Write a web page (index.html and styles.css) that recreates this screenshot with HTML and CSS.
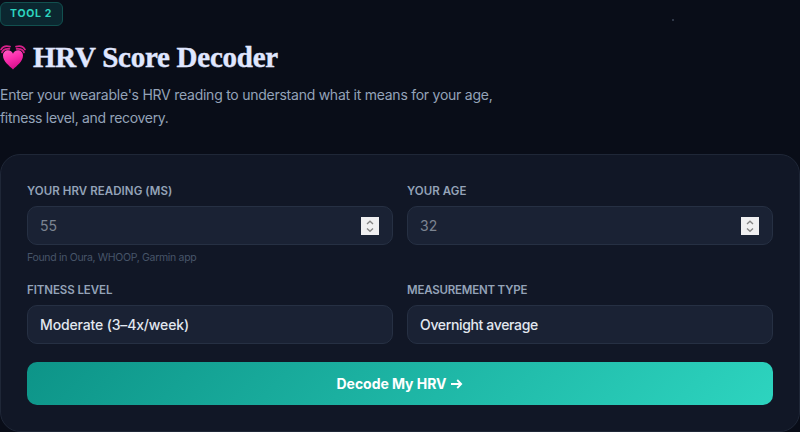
FILE: index.html
```html
<!DOCTYPE html>
<html lang="en">
<head>
    <meta charset="UTF-8">
    <meta name="viewport" content="width=device-width, initial-scale=1.0">
    <title>HRV Score Decoder</title>
    <link rel="stylesheet" href="styles.css">
</head>
<body>
    <span class="star"></span>
    <section class="tool">
        <div class="tool-tag">TOOL 2</div>
        <h2 class="tool-title">
            <svg class="heart" viewBox="0 0 26 26" aria-hidden="true">
                <defs>
                    <linearGradient id="heartFill" x1="0" y1="0" x2="0.4" y2="1">
                        <stop offset="0" stop-color="#ff5cc4"/>
                        <stop offset="0.5" stop-color="#fb2fae"/>
                        <stop offset="1" stop-color="#d8108c"/>
                    </linearGradient>
                </defs>
                <path d="M13 25.500C9.500 22 3 17.800 3 11.600C3 8.300 5.400 6.300 8 6.300C10.400 6.300 12.200 7.800 13 9.800C13.800 7.800 15.600 6.300 18 6.300C20.600 6.300 23 8.300 23 11.600C23 17.800 16.500 22 13 25.500Z" fill="url(#heartFill)"/>
                <g fill="none" stroke="#d8208a" stroke-width="1.7" stroke-linecap="round">
                    <path d="M2 8.400C3 5.800 5.400 4.400 9.400 4.900"/>
                    <path d="M1 5.600C2.600 2.600 5.800 1.400 10 2.600"/>
                    <path d="M24 8.400C23 5.800 20.600 4.400 16.600 4.900"/>
                    <path d="M25 5.600C23.400 2.600 20.200 1.400 16 2.600"/>
                </g>
            </svg>
            <span class="title-text">HRV Score Decoder</span>
        </h2>
        <p class="tool-desc"><span class="desc-one">Enter your wearable's HRV reading to understand what it means for your age,</span><br><span class="desc-two">fitness level, and recovery.</span></p>

        <form class="card" onsubmit="return false">
            <div class="form-grid">
                <div class="field">
                    <label class="label-hrv" for="hrv">YOUR HRV READING (MS)</label>
                    <div class="control">
                        <input type="text" inputmode="numeric" id="hrv" placeholder="55">
                        <span class="spinner"><svg viewBox="0 0 18 18"><path d="M6 7L9 4.300L12 7M6 11.500L9 14.200L12 11.500"/></svg></span>
                    </div>
                    <div class="hint">Found in Oura, WHOOP, Garmin app</div>
                </div>
                <div class="field">
                    <label class="label-age" for="age">YOUR AGE</label>
                    <div class="control">
                        <input type="text" inputmode="numeric" id="age" placeholder="32">
                        <span class="spinner"><svg viewBox="0 0 18 18"><path d="M6 7L9 4.300L12 7M6 11.500L9 14.200L12 11.500"/></svg></span>
                    </div>
                </div>
                <div class="field">
                    <label class="label-fitness" for="fitness">FITNESS LEVEL</label>
                    <select class="control select-fitness" id="fitness">
                        <option>Moderate (3–4x/week)</option>
                    </select>
                </div>
                <div class="field">
                    <label class="label-type" for="type">MEASUREMENT TYPE</label>
                    <select class="control select-type" id="type">
                        <option>Overnight average</option>
                    </select>
                </div>
            </div>
            <button class="decode-btn" type="submit">
                <span>Decode My HRV</span>
                <svg viewBox="0 0 13 12" aria-hidden="true"><path d="M1 6H11M7.200 2L11.200 6L7.200 10"/></svg>
            </button>
        </form>
    </section>
</body>
</html>
```
FILE: styles.css
```css
* {
    box-sizing: border-box;
}
body {
    margin: 0;
    height: 432px;
    overflow: hidden;
    background-color: #090d18;
    color: #e2e8f0;
    font-family: Inter, "Liberation Sans", sans-serif;
}
.star {
    position: absolute;
    left: 672px;
    top: 19px;
    width: 2px;
    height: 2px;
    border-radius: 50%;
    background: #3c4657;
}
.tool {
    padding-top: 2px;
}
.tool-tag {
    width: 63px;
    height: 24px;
    padding-left: 9px;
    border: 1px solid #12504f;
    border-radius: 6px;
    background: #0b2730;
    color: #2dd4bf;
    font-size: 10.5px;
    font-weight: 700;
    line-height: 22px;
    letter-spacing: 0.7px;
    white-space: nowrap;
}
.tool-title {
    display: flex;
    align-items: center;
    gap: 7px;
    height: 36px;
    margin: 13px 0 0;
    color: #e0e7ff;
    font-family: "Liberation Serif", serif;
    font-size: 29px;
    font-weight: 700;
    line-height: 36px;
    white-space: nowrap;
}
.heart {
    width: 26px;
    height: 26px;
}
.title-text {
    letter-spacing: -0.25px;
    -webkit-text-stroke: 0.4px #e0e7ff;
}
.tool-desc {
    margin: 8px 0 0;
    color: #94a3b8;
    font-size: 14px;
    line-height: 23px;
    white-space: nowrap;
}
.desc-one {
    letter-spacing: -0.25px;
}
.desc-two {
    letter-spacing: -0.31px;
}
.card {
    height: 278px;
    margin-top: 25px;
    padding: 29px 26px 0;
    border: 1px solid #1f2737;
    border-radius: 20px;
    background: #111726;
}
.form-grid {
    display: grid;
    grid-template-columns: 1fr 1fr;
    gap: 18px 14px;
}
.field label {
    display: block;
    height: 14px;
    margin-bottom: 8px;
    color: #94a3b8;
    font-size: 11.5px;
    font-weight: 600;
    line-height: 14px;
    letter-spacing: 0.07px;
    white-space: nowrap;
}
.field .label-fitness {
    letter-spacing: -0.08px;
}
.field .label-type {
    letter-spacing: -0.2px;
}
.control {
    display: flex;
    align-items: center;
    width: 100%;
    height: 39px;
    padding: 0 13px 0 12px;
    border: 1px solid #263043;
    border-radius: 10px;
    background: #1a2234;
    color: #e2e8f0;
}
.control input {
    flex: 1;
    min-width: 0;
    padding: 0;
    border: 0;
    outline: 0;
    background: none;
    color: #e2e8f0;
    font: 14px Inter, sans-serif;
}
.control input::placeholder {
    color: #7c8491;
}
select.control {
    appearance: none;
    font: 500 14px Inter, sans-serif;
}
.select-fitness {
    letter-spacing: -0.15px;
}
.select-type {
    letter-spacing: -0.35px;
}
.spinner {
    width: 18px;
    height: 18px;
    background: #efeff1;
}
.spinner svg {
    display: block;
    fill: none;
    stroke: #858585;
    stroke-width: 1.4;
}
.hint {
    height: 14px;
    margin-top: 6px;
    color: #475569;
    font-size: 10.5px;
    line-height: 14px;
    letter-spacing: -0.32px;
    white-space: nowrap;
}
.decode-btn {
    display: flex;
    align-items: center;
    justify-content: center;
    gap: 4px;
    width: 100%;
    height: 43px;
    margin-top: 18px;
    padding: 0;
    border: 0;
    border-radius: 10px;
    background: linear-gradient(135deg, #0d9488, #2dd4bf);
    color: white;
    font: 700 14px Inter, sans-serif;
    letter-spacing: -0.05px;
}
.decode-btn svg {
    width: 13px;
    height: 12px;
    fill: none;
    stroke: white;
    stroke-width: 1.8;
}
```
